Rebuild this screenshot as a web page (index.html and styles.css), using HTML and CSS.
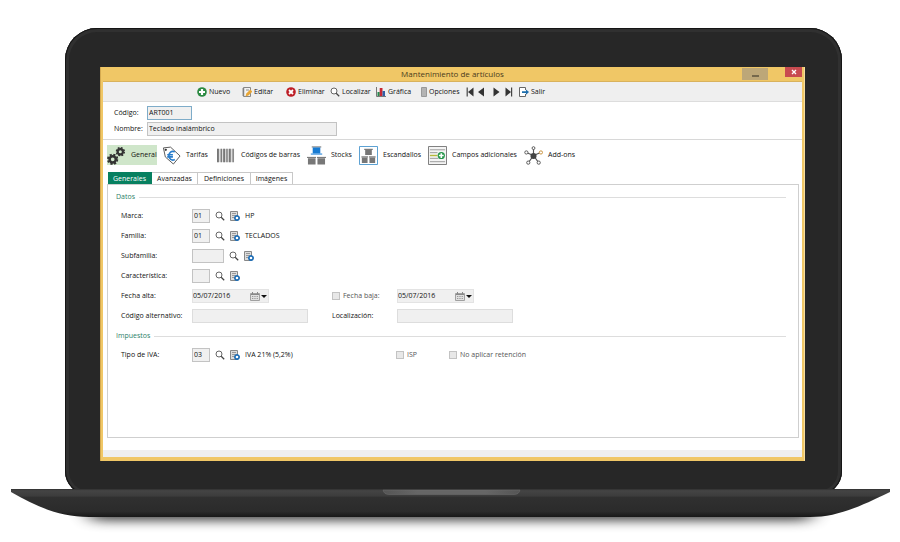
FILE: index.html
```html
<!DOCTYPE html>
<html lang="es">
<head>
<meta charset="utf-8">
<meta name="viewport" content="width=device-width, initial-scale=1">
<title>Mantenimiento de artículos</title>
<link rel="stylesheet" href="styles.css">
</head>
<body>
<svg class="defs" aria-hidden="true">
  <symbol id="lens" viewBox="0 0 10 10"><circle cx="4" cy="4" r="3" fill="#fff" stroke="#666" stroke-width="1"/><path d="M6.2 6.2 9.2 9.2" stroke="#444" stroke-width="1.3"/></symbol>
  <symbol id="record" viewBox="0 0 10 10"><path d="M.5.5h7v9h-7z" fill="#ddd" stroke="#888"/><path d="M2 2.5h4M2 4.5h4M2 6.5h2" stroke="#888" stroke-width=".8"/><circle cx="7" cy="7" r="2.1" fill="#fff" stroke="#1b6cb5" stroke-width="1.5"/><path d="M7 4v1.3M7 8.7V10M4 7h1.3M8.7 7H10" stroke="#1b6cb5" stroke-width="1.2"/></symbol>
  <symbol id="calendar" viewBox="0 0 10 9"><path d="M.5 1.5h9v7h-9z" fill="#e0e0e0" stroke="#a0a0a0"/><path d="M1 2.5h8" stroke="#888"/><path d="M2 4.5h6M2 6.5h6" stroke="#999" stroke-dasharray="1 .7"/><path d="M2.5 0v2M7.5 0v2" stroke="#888"/></symbol>
  <symbol id="gear" viewBox="0 0 12 12"><circle cx="6" cy="6" r="3.3" fill="none" stroke="#333" stroke-width="2.7"/><circle cx="6" cy="6" r="5" fill="none" stroke="#333" stroke-width="2" stroke-dasharray="2.3 1.63"/></symbol>
</svg>
<main class="laptop">
  <div class="lid">
    <div class="window">
      <header class="titlebar">
        <h1>Mantenimiento de artículos</h1>
        <button class="minimize" type="button" aria-label="Minimizar"><span></span></button>
        <button class="close" type="button" aria-label="Cerrar"><svg viewBox="0 0 6 6"><path d="M1 1l4 4M5 1 1 5" stroke="#fff" stroke-width="1.3"/></svg></button>
      </header>
      <div class="client">
      <div class="toolbar">
        <button type="button"><svg viewBox="0 0 10 10"><circle cx="5" cy="5" r="4.8" fill="#2b8a42"/><path d="M5 2v6M2 5h6" stroke="#fff" stroke-width="2.2"/></svg>Nuevo</button>
        <button type="button"><svg viewBox="0 0 10 10"><path d="M1.5.5h7v9h-7z" fill="#f1f1f1" stroke="#888"/><path d="M0 2h2.5M0 4h2.5M0 6h2.5M0 8h2.5M4 3h3" stroke="#777" stroke-width=".8"/><path d="m3.500 9.500.8-3L8.300 2.500 10.300 4.600 6.400 8.600z" fill="#e7a534"/></svg>Editar</button>
        <button type="button"><svg viewBox="0 0 10 10"><circle cx="5" cy="5" r="4.8" fill="#bd1e26"/><path d="m3 3 4 4M7 3 3 7" stroke="#fff" stroke-width="1.8"/></svg>Eliminar</button>
        <button type="button"><svg><use href="#lens"/></svg>Localizar</button>
        <button type="button"><svg viewBox="0 0 10 10"><path d="M.5 0v9.5H10" fill="none" stroke="#777"/><path d="M1.5 5h2.2v4H1.5z" fill="#228b4e"/><path d="M3.700 1h2.800v8H3.700z" fill="#c62732"/><path d="M6.500 4H9v5H6.500z" fill="#305fa5"/></svg>Gráfica</button>
        <button type="button" class="narrow"><svg viewBox="0 0 6 10"><path d="M.5.5h5v9h-5z" fill="#ddd" stroke="#999"/><path d="M1 2h4M1 4h4M1 6h4M1 8h4" stroke="#777" stroke-width=".8"/></svg>Opciones</button>
        <button type="button" aria-label="Primero"><svg viewBox="0 0 10 10"><path d="M1.2.5v9" stroke="#444" stroke-width="1.2"/><path d="M7.5.5v9L2 5z" fill="#333"/></svg></button>
        <button type="button" aria-label="Anterior"><svg viewBox="0 0 10 10"><path d="M6 .5v9L0 5z" fill="#333"/></svg></button>
        <button type="button" aria-label="Siguiente"><svg viewBox="0 0 10 10"><path d="M.5.5v9L6.500 5z" fill="#333"/></svg></button>
        <button type="button" aria-label="Último"><svg viewBox="0 0 10 10"><path d="M.5.5v9L6 5z" fill="#333"/><path d="M6.600.5v9" stroke="#444" stroke-width="1.2"/></svg></button>
        <button type="button"><svg viewBox="0 0 10 10"><path d="M6.500 3V.5h-6v9h6V7" fill="#fff" stroke="#666"/><path d="M3 4.200h4V2.400L10 5 7 7.700V5.900H3z" fill="#1d6dac"/></svg>Salir</button>
      </div>
      <div class="article">
        <label for="codigo">Código:</label><input id="codigo" class="code" value="ART001">
        <label for="nombre">Nombre:</label><input id="nombre" value="Teclado inalámbrico">
      </div>
      <nav class="sections">
        <a class="current" href="#panel"><svg viewBox="0 0 20 20"><use href="#gear" x="0" y="8" width="12" height="12"/><use href="#gear" x="9" y="1" width="10" height="10"/></svg>General</a>
        <a href="#panel"><svg viewBox="0 0 20 20"><path d="M1.500 2 9 1.200 19 10.500 12 19 3.500 11.500z" fill="#fff" stroke="#555"/><circle cx="4" cy="4" r="1.200" fill="#333"/><path d="M13.500 6.200C9.800 4.500 7.300 7 7.300 10.300s2.800 5.700 6.200 3.900M5.500 9.200h6M5.500 11.500h6" fill="none" stroke="#287dcc" stroke-width="1.700"/></svg>Tarifas</a>
        <a href="#panel"><svg viewBox="0 0 20 20"><path d="M0 3h18v14H0z" fill="#ddd"/><path d="M1 3v14M7.500 3v14M13.500 3v14" stroke="#777" stroke-width="2"/><path d="M4.500 3v14M10.500 3v14M17 3v14" stroke="#777" stroke-width="1.400"/></svg>Códigos de barras</a>
        <a href="#panel"><svg viewBox="0 0 20 20"><path d="M5 1h10M0 12h9.500M10.500 12H20" stroke="#666"/><path d="M6 1.500h8V8H6z" fill="#187bd2"/><path d="M4 8.500h12" stroke="#4c9be0" stroke-width="1.400"/><path d="M1 13h8v6.500H1zM11 13h8v6.500h-8z" fill="#777"/></svg>Stocks</a>
        <a href="#panel"><svg viewBox="0 0 20 20"><path d="M.5.5h19v19H.5z" fill="#fff" stroke="#519bd0"/><path d="M5.500 3.500h9M2.500 11.500h7M10.500 11.500h7" stroke="#555"/><path d="M6.500 4h7v5.500h-7zM3 12h6v6H3zM11 12h6v6h-6z" fill="#777"/></svg>Escandallos</a>
        <a href="#panel"><svg viewBox="0 0 20 20"><path d="M.5.5h19v19H.5z" fill="#f4f4f4" stroke="#777"/><path d="M2 4h16M2 7h8M2 13h9M2 16.500h16" stroke="#999"/><path d="M2 10h8" stroke="#b5b83b" stroke-width="1.500"/><circle cx="14" cy="10" r="3.800" fill="#25964a"/><path d="M14 7.500v5M11.500 10h5" stroke="#fff" stroke-width="1.700"/></svg>Campos adicionales</a>
        <a href="#panel"><svg viewBox="0 0 20 20"><path d="M10 10V3M10 10 3 7M10 10l7-3M10 10l-5 7M10 10l5 7" stroke="#555" stroke-width="1.200"/><circle cx="10" cy="10.500" r="3.200" fill="#444"/><g fill="#fff" stroke="#555"><circle cx="10" cy="2.200" r="1.500"/><circle cx="2.500" cy="6.800" r="1.700"/><circle cx="4.500" cy="17.500" r="1.700"/><circle cx="15.500" cy="17.500" r="1.700"/><circle cx="17.800" cy="6.800" r="1.700" stroke="#c7903b"/></g></svg>Add-ons</a>
      </nav>
      <div class="tabs" role="tablist">
        <button type="button" role="tab" aria-selected="true">Generales</button>
        <button type="button" role="tab">Avanzadas</button>
        <button type="button" role="tab">Definiciones</button>
        <button type="button" role="tab">Imágenes</button>
      </div>
      <section class="panel" id="panel">
        <h2>Datos</h2>
        <div class="row">
          <label for="marca">Marca:</label>
          <div class="lookup"><input id="marca" value="01"><button type="button" aria-label="Buscar"><svg><use href="#lens"/></svg></button><button type="button" aria-label="Ficha"><svg><use href="#record"/></svg></button><span>HP</span></div>
        </div>
        <div class="row">
          <label for="familia">Familia:</label>
          <div class="lookup"><input id="familia" value="01"><button type="button" aria-label="Buscar"><svg><use href="#lens"/></svg></button><button type="button" aria-label="Ficha"><svg><use href="#record"/></svg></button><span>TECLADOS</span></div>
        </div>
        <div class="row">
          <label for="subfamilia">Subfamilia:</label>
          <div class="lookup"><input id="subfamilia" class="wide"><button type="button" aria-label="Buscar"><svg><use href="#lens"/></svg></button><button type="button" aria-label="Ficha"><svg><use href="#record"/></svg></button></div>
        </div>
        <div class="row">
          <label for="caracteristica">Característica:</label>
          <div class="lookup"><input id="caracteristica"><button type="button" aria-label="Buscar"><svg><use href="#lens"/></svg></button><button type="button" aria-label="Ficha"><svg><use href="#record"/></svg></button></div>
        </div>
        <div class="row">
          <label for="alta">Fecha alta:</label>
          <div class="date"><input id="alta" value="05/07/2016"><button type="button" aria-label="Abrir calendario"><svg><use href="#calendar"/></svg><i></i></button></div>
          <label class="check"><input type="checkbox">Fecha baja:</label>
          <div class="date"><input aria-label="Fecha baja" value="05/07/2016"><button type="button" aria-label="Abrir calendario"><svg><use href="#calendar"/></svg><i></i></button></div>
        </div>
        <div class="row">
          <label for="alternativo">Código alternativo:</label>
          <input id="alternativo" class="plain">
          <label for="localizacion">Localización:</label>
          <input id="localizacion" class="plain">
        </div>
        <h2>Impuestos</h2>
        <div class="row">
          <label for="iva">Tipo de IVA:</label>
          <div class="lookup"><input id="iva" value="03"><button type="button" aria-label="Buscar"><svg><use href="#lens"/></svg></button><button type="button" aria-label="Ficha"><svg><use href="#record"/></svg></button><span>IVA 21% (5,2%)</span></div>
          <div class="taxes"><label class="check"><input type="checkbox">ISP</label><label class="check"><input type="checkbox">No aplicar retención</label></div>
        </div>
      </section>
      <footer class="status"></footer>
      </div>
    </div>
  </div>
  <svg class="base" viewBox="0 0 879 53" preserveAspectRatio="none" aria-hidden="true">
    <defs>
      <linearGradient id="metal" x1="0" y1="0" x2="0" y2="1"><stop offset="0" stop-color="#303030"/><stop offset=".06" stop-color="#444"/><stop offset=".25" stop-color="#3c3c3c"/><stop offset=".3" stop-color="#303030"/><stop offset=".8" stop-color="#2b2b2b"/><stop offset="1" stop-color="#181818"/></linearGradient>
      <linearGradient id="notch"><stop offset="0" stop-color="#555"/><stop offset=".25" stop-color="#666"/><stop offset=".75" stop-color="#666"/><stop offset="1" stop-color="#555"/></linearGradient>
      <filter id="soft" x="-10%" y="-200%" width="120%" height="500%"><feGaussianBlur stdDeviation="10 6"/></filter>
    </defs>
    <path d="M75 16H804L798 31H81z" fill="#000" opacity=".8" filter="url(#soft)"/>
    <path d="M0 0H879V3C848 18 826 28 799 28H78C47 28 25 17 0 3z" fill="url(#metal)"/>
    <path d="M372 1H509Q508 5.500 503 5.500H378Q373 5.500 372 1z" fill="url(#notch)" stroke="#777" stroke-width=".4"/>
  </svg>
</main>
</body>
</html>
```
FILE: styles.css
```css
* { box-sizing: border-box; }
body {
  margin: 0;
  background: #fff;
  color: #111;
  font: 7px/10px "Open Sans", "Noto Sans", sans-serif;
}
.defs { position: absolute; width: 0; height: 0; }
.laptop { padding: 28px 10px 0 11px; }
.lid {
  margin: 0 48px 0 54px;
  padding: 39px 37px 34px 35px;
  border-radius: 32px 32px 24px 24px;
  background: #272727;
  box-shadow: inset 0 0 0 1px #151515, inset 0 0 0 4px #303030;
}
.base { display: block; position: relative; width: 100%; height: 53px; margin-top: -6px; }

button, input { font: inherit; color: inherit; margin: 0; padding: 0; border-radius: 0; }
button { display: flex; align-items: center; border: 0; background: none; white-space: nowrap; }
input { min-width: 0; height: 14px; padding: 0 1px 1px; border: 1px solid #c3c3c3; background: #f0f0f0; }
svg { flex: none; }

.window { padding: 0 3px 4px; background: #f0c766; box-shadow: inset 1px 0 #d5aa50, inset -1px 0 #f5dda0; }
.client { background: #fff; }
.titlebar { display: flex; align-items: flex-start; height: 15px; border-bottom: 1px solid #d9b25c; }
.titlebar h1 { flex: 1; margin: 0; padding-left: 60px; font-size: 8px; line-height: 14px; font-weight: 400; text-align: center; color: #4a3b1c; }
.minimize { justify-content: center; align-items: flex-end; width: 26px; height: 12px; margin: 1px 17px 0 0; padding-bottom: 3px; background: #bda778; }
.minimize span { width: 7px; height: 2px; background: #75684c; }
.close { justify-content: center; width: 17px; height: 10px; background: #c84b50; }
.close svg { width: 6px; height: 6px; }

.toolbar {
  display: grid;
  grid-template-columns: 45px 44px 44px 46px 45px 45px 12px 15px 12px 14px auto;
  height: 20px;
  padding-left: 94px;
  border-bottom: 1px solid #ddd;
  background: #efefef;
}
.toolbar button { gap: 2px; }
.toolbar svg { width: 10px; height: 10px; }
.toolbar .narrow svg { width: 6px; }

.article {
  display: grid;
  grid-template-columns: 33px 190px;
  gap: 2px 0;
  align-items: center;
  padding: 4px 11px 3px;
  border-bottom: 1px solid #d8d8d8;
}
.article .code { width: 45px; border-color: #7eacc9; }

.sections {
  display: grid;
  grid-template-columns: 55px 55px 90px 52px 69px 96px auto;
  padding: 5px 4px 7px;
}
.sections a { display: flex; align-items: center; justify-self: start; gap: 5px; height: 20px; color: inherit; text-decoration: none; white-space: nowrap; }
.sections .current { width: 50px; background: #cfe6ca; }
.sections svg { width: 19px; height: 19px; }

.tabs { display: grid; grid-template-columns: 44px 46px 53px 42px; padding-left: 5px; }
.tabs button { justify-content: center; height: 12px; border: 1px solid #c8c8c8; border-width: 1px 1px 0 0; }
.tabs [aria-selected] { border-color: #078060; background: #078060; color: #fff; }

.panel { margin: 0 3px 0 4px; padding: 7px 12px 72px 8px; border: 1px solid #cfcfcf; }
.panel h2 { display: flex; align-items: center; gap: 4px; margin: 0; font-size: 7px; line-height: 10px; font-weight: 400; color: #2c8068; }
.panel h2::after { content: ""; flex: 1; height: 1px; background: #ddd; }
.row { display: grid; grid-template-columns: 71px 140px 65px auto; align-items: center; justify-content: start; height: 20px; padding-left: 5px; }
h2 + .row { margin-top: 4px; }
.row + h2 { margin-top: 5px; }
.lookup { display: flex; align-items: center; gap: 5px; }
.lookup input { width: 18px; }
.lookup .wide { width: 32px; }
.lookup svg { width: 10px; height: 10px; }
.date { display: flex; width: 77px; height: 14px; border: 1px solid #e3e3e3; background: #efefef; }
.date input { flex: 1; height: 12px; padding: 0 0 1px; border: 0; }
.date button { gap: 1px; padding-right: 1px; }
.date svg { width: 10px; height: 9px; }
.date i { border: 3px solid transparent; border-top-color: #111; border-bottom: 0; }
.plain { width: 116px; border-color: #ddd; }
.check { display: flex; align-items: center; gap: 3px; color: #555; white-space: nowrap; }
.check input { appearance: none; width: 8px; height: 8px; padding: 0; background: #e8e8e8; }
.taxes { display: grid; grid-template-columns: 53px auto; grid-column: 3 / 5; padding-left: 64px; }
.status { height: 19px; border-top: 12px solid #fff; background: #efefef; }
```
